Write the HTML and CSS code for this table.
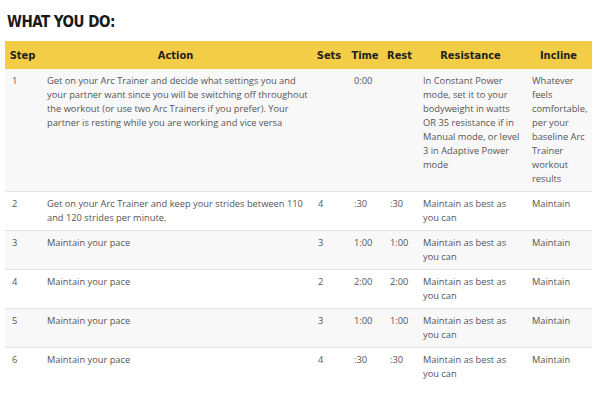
FILE: index.html
```html
<!DOCTYPE html>
<html lang="en">
<head>
    <meta charset="UTF-8">
    <title>What You Do</title>
    <link rel="stylesheet" href="styles.css">
</head>
<body>
    <div class="container">
        <h2 class="section-title">WHAT YOU DO:</h2>
        <table class="workout-table">
            <colgroup>
                <col class="col-step">
                <col class="col-action">
                <col class="col-sets">
                <col class="col-time">
                <col class="col-rest">
                <col class="col-resistance">
                <col class="col-incline">
            </colgroup>
            <thead>
                <tr>
                    <th>Step</th>
                    <th>Action</th>
                    <th>Sets</th>
                    <th>Time</th>
                    <th>Rest</th>
                    <th>Resistance</th>
                    <th>Incline</th>
                </tr>
            </thead>
            <tbody>
                <tr>
                    <td>1</td>
                    <td>Get on your Arc Trainer and decide what settings you and your partner want since you will be switching off throughout the workout (or use two Arc Trainers if you prefer). Your partner is resting while you are working and vice versa</td>
                    <td></td>
                    <td>0:00</td>
                    <td></td>
                    <td>In Constant Power mode, set it to your bodyweight in watts OR 35 resistance if in Manual mode, or level 3 in Adaptive Power mode</td>
                    <td>Whatever feels comfortable, per your baseline Arc Trainer workout results</td>
                </tr>
                <tr>
                    <td>2</td>
                    <td>Get on your Arc Trainer and keep your strides between 110 and 120 strides per minute.</td>
                    <td>4</td>
                    <td>:30</td>
                    <td>:30</td>
                    <td>Maintain as best as you can</td>
                    <td>Maintain</td>
                </tr>
                <tr>
                    <td>3</td>
                    <td>Maintain your pace</td>
                    <td>3</td>
                    <td>1:00</td>
                    <td>1:00</td>
                    <td>Maintain as best as you can</td>
                    <td>Maintain</td>
                </tr>
                <tr>
                    <td>4</td>
                    <td>Maintain your pace</td>
                    <td>2</td>
                    <td>2:00</td>
                    <td>2:00</td>
                    <td>Maintain as best as you can</td>
                    <td>Maintain</td>
                </tr>
                <tr>
                    <td>5</td>
                    <td>Maintain your pace</td>
                    <td>3</td>
                    <td>1:00</td>
                    <td>1:00</td>
                    <td>Maintain as best as you can</td>
                    <td>Maintain</td>
                </tr>
                <tr>
                    <td>6</td>
                    <td>Maintain your pace</td>
                    <td>4</td>
                    <td>:30</td>
                    <td>:30</td>
                    <td>Maintain as best as you can</td>
                    <td>Maintain</td>
                </tr>
            </tbody>
        </table>
    </div>
</body>
</html>
```

FILE: styles.css
```css
body {
    margin: 0;
    padding: 0;
    background: #fff;
    font-family: 'Open Sans', 'DejaVu Sans', sans-serif;
}
.container {
    padding: 12px 8px 0 5px;
}
.section-title {
    margin: 0 0 8px 2px;
    font-family: 'DejaVu Sans Condensed', 'Liberation Sans', Arial, sans-serif;
    font-weight: 700;
    font-size: 15px;
    line-height: 21px;
    letter-spacing: -0.5px;
    color: #1a1a1a;
}
.workout-table {
    width: 587px;
    border-collapse: collapse;
    table-layout: fixed;
}
.col-step { width: 35px; }
.col-action { width: 271px; }
.col-sets { width: 36px; }
.col-time { width: 36px; }
.col-rest { width: 33px; }
.col-resistance { width: 109px; }
.col-incline { width: 67px; }
.workout-table th {
    background: #f2cd45;
    color: #1f1f1f;
    font-family: 'DejaVu Sans Condensed', 'Liberation Sans', Arial, sans-serif;
    font-weight: 700;
    font-size: 11px;
    text-align: center;
    height: 28px;
    padding: 0 1px;
}
.workout-table td {
    vertical-align: top;
    text-align: left;
    padding: 5px 3px 5px 7px;
    font-size: 9.3px;
    line-height: 14px;
    color: #555;
}
.workout-table tbody tr {
    border-bottom: 1px solid #e4e4e4;
}
.workout-table tbody tr:last-child {
    border-bottom: none;
}
.workout-table tbody tr:nth-child(odd) {
    background: #f8f8f8;
}
```
